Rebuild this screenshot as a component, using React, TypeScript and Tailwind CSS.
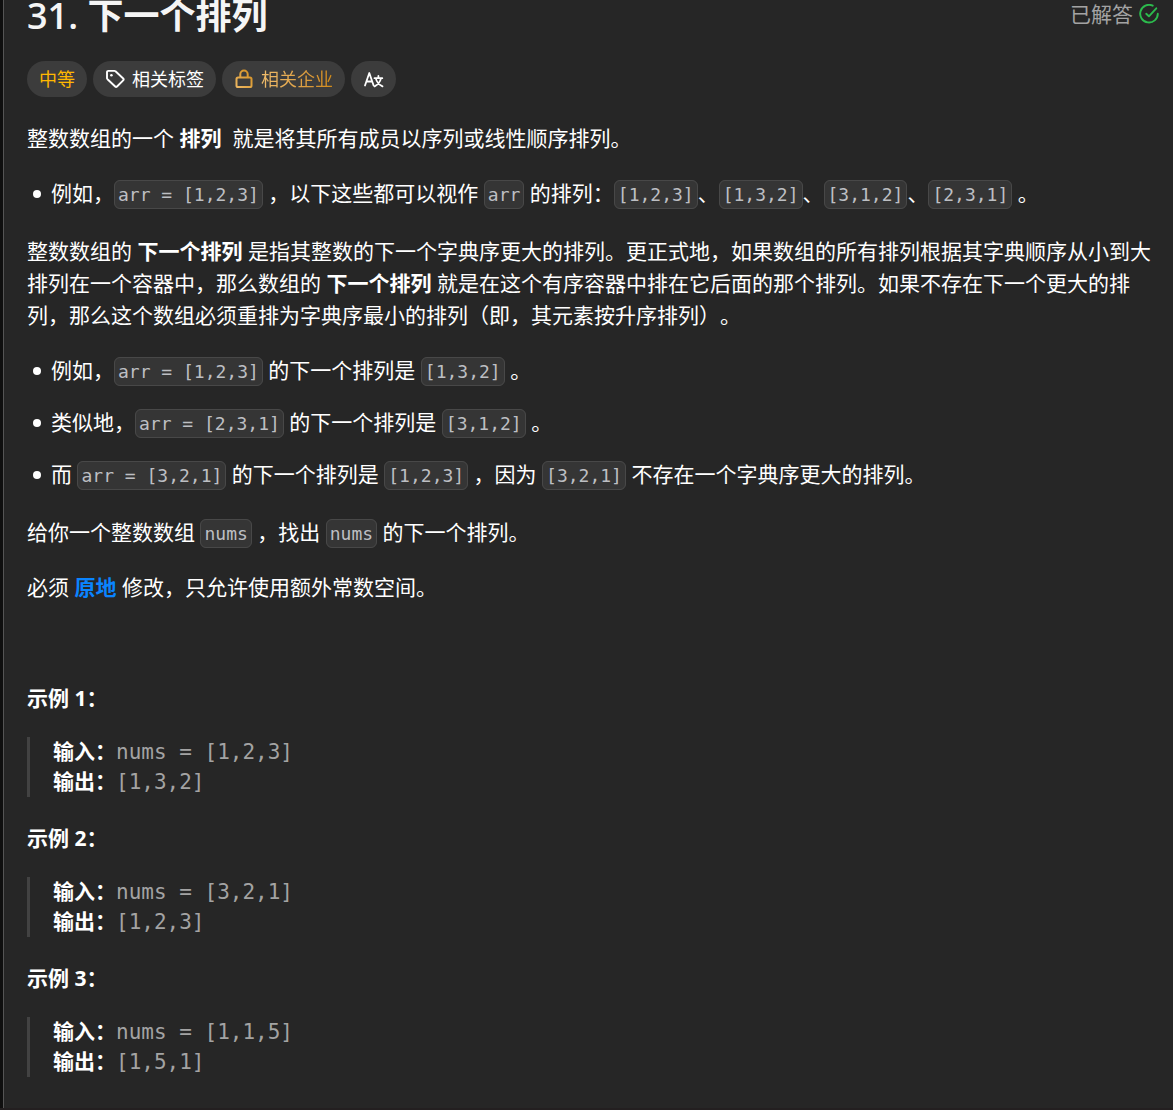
import React from 'react';

const Code = ({ children }: { children: React.ReactNode }) => (
  <code className="rounded-md border border-[#484848] bg-[#353535] p-[3px] font-['DejaVu_Sans_Mono',monospace] text-lg leading-none text-[#bdbfc3]">
    {children}
  </code>
);

const Item = ({ children }: { children: React.ReactNode }) => (
  <li className="before:mr-2.5 before:inline-block before:h-2 before:w-2 before:rounded-full before:bg-white before:align-[3px]">
    {children}
  </li>
);

const examples = [
  { id: 1, input: 'nums = [1,2,3]', output: '[1,3,2]' },
  { id: 2, input: 'nums = [3,2,1]', output: '[1,2,3]' },
  { id: 3, input: 'nums = [1,1,5]', output: '[1,5,1]' },
];

const TagIcon = () => (
  <svg viewBox="0 0 20 20" className="h-5 w-5" fill="none" stroke="currentColor" strokeWidth="1.9" strokeLinejoin="round">
    <path d="M2 3.200A1.300 1.300 0 0 1 3.300 1.900h6.200c.4 0 .8.2 1 .4l7.700 7.200c.5.5.5 1.300 0 1.800l-6.200 6.200c-.5.5-1.300.5-1.800 0L2.500 10.200c-.3-.3-.5-.7-.5-1z" />
    <circle cx="6.400" cy="6.300" r="1.300" fill="currentColor" stroke="none" />
  </svg>
);

const LockIcon = () => (
  <svg viewBox="0 0 20 20" className="h-5 w-5" fill="none" stroke="url(#gold)" strokeWidth="2">
    <defs>
      <linearGradient id="gold" x1="0" y1="20" x2="20" y2="0" gradientUnits="userSpaceOnUse">
        <stop stopColor="#f0bd6c" />
        <stop offset="1" stopColor="#d18a16" />
      </linearGradient>
    </defs>
    <rect x="2.500" y="8.500" width="15" height="9.500" rx="1.600" />
    <path d="M6.300 8.500V5.300a3.700 3.700 0 0 1 7.400 0v3.200" />
  </svg>
);

const TranslateIcon = () => (
  <svg viewBox="0 0 21 21" className="h-[21px] w-[21px]" fill="none" stroke="currentColor" strokeWidth="1.8" strokeLinecap="round" strokeLinejoin="round">
    <path d="M2 16.500 6.300 4l4.300 12.500M3.500 12.500h5.600" />
    <path d="M11.500 9.200h7.800M15.400 7v2.200M18 9.400c-.9 3.500-3.100 6.300-6.400 8M12.800 9.400c.9 3.500 3.200 6.300 6.700 8" />
  </svg>
);

const SolvedIcon = () => (
  <svg viewBox="0 0 20 20" className="h-5 w-5" fill="none" stroke="#2cbb4d" strokeWidth="1.9" strokeLinecap="round" strokeLinejoin="round">
    <path d="M13.700 1.700A8.800 8.800 0 1 0 18.800 9.700" />
    <path d="m7.200 9.800 2.700 2.500 7.400-8" />
  </svg>
);

export default function App() {
  return (
    <div lang="zh-CN" className="min-h-screen border-b-2 border-[#231f20] bg-[#0f0f0f] pl-[3px] font-['Open_Sans','Noto_Sans_CJK_SC',sans-serif] [text-spacing-trim:space-all]">
      <main className="min-h-[calc(100vh-2px)] border-l border-[#555] bg-[#262626] pr-3.5 pl-[23px] text-[21px] leading-8 text-white">
        <header className="flex items-start justify-between">
          <h1 className="text-4xl leading-8 font-bold text-[#f5f5f5]">
            <span className="font-semibold">31.</span>
            <span className="font-normal"> </span>下一个排列
          </h1>
          <div className="flex items-center gap-1.5 leading-7 text-[#a3a3a3]">
            已解答
            <SolvedIcon />
          </div>
        </header>

        <div className="mt-[29px] mb-[25px] flex gap-1.5 text-lg leading-9">
          <span className="rounded-full bg-[#3c3c3c] px-3 text-[#ffb800]">中等</span>
          <button className="flex items-center gap-[7px] rounded-full bg-[#3c3c3c] px-3">
            <TagIcon />
            相关标签
          </button>
          <button className="flex items-center gap-[7px] rounded-full bg-[#3c3c3c] px-3">
            <LockIcon />
            <span className="bg-linear-to-r from-[#f0bd6c] to-[#d18a16] bg-clip-text text-transparent">相关企业</span>
          </button>
          <button aria-label="翻译" className="flex items-center rounded-full bg-[#3c3c3c] px-3">
            <TranslateIcon />
          </button>
        </div>

        <p className="mb-[23px]">
          整数数组的一个 <strong>排列</strong>&nbsp; 就是将其所有成员以序列或线性顺序排列。
        </p>
        <ul className="mb-[26px] pl-1.5">
          <Item>
            例如，<Code>arr = [1,2,3]</Code> ，以下这些都可以视作 <Code>arr</Code> 的排列：<Code>[1,2,3]</Code>、<Code>[1,3,2]</Code>、<Code>[3,1,2]</Code>、<Code>[2,3,1]</Code> 。
          </Item>
        </ul>
        <p className="mb-[23px]">
          整数数组的 <strong>下一个排列</strong> 是指其整数的下一个字典序更大的排列。更正式地，如果数组的所有排列根据其字典顺序从小到大排列在一个容器中，那么数组的 <strong>下一个排列</strong> 就是在这个有序容器中排在它后面的那个排列。如果不存在下一个更大的排列，那么这个数组必须重排为字典序最小的排列（即，其元素按升序排列）。
        </p>
        <ul className="mb-[26px] space-y-5 pl-1.5">
          <Item>
            例如，<Code>arr = [1,2,3]</Code> 的下一个排列是 <Code>[1,3,2]</Code> 。
          </Item>
          <Item>
            类似地，<Code>arr = [2,3,1]</Code> 的下一个排列是 <Code>[3,1,2]</Code> 。
          </Item>
          <Item>
            而 <Code>arr = [3,2,1]</Code> 的下一个排列是 <Code>[1,2,3]</Code> ，因为 <Code>[3,2,1]</Code> 不存在一个字典序更大的排列。
          </Item>
        </ul>
        <p className="mb-[23px]">
          给你一个整数数组 <Code>nums</Code> ，找出 <Code>nums</Code> 的下一个排列。
        </p>
        <p className="mb-[23px]">
          必须 <a href="#in-place" className="font-bold text-[#0a84ff]">原地</a> 修改，只允许使用额外常数空间。
        </p>
        <p className="mb-6">&nbsp;</p>

        {examples.map((ex) => (
          <section key={ex.id}>
            <p className="mb-[23px] font-bold">示例 {ex.id}：</p>
            <pre className="mb-[25px] border-l-3 border-[#424242] pl-[23px] font-['DejaVu_Sans_Mono','Noto_Sans_CJK_SC',monospace] leading-[30px] text-[#a3a3a3]">
              <strong className="text-white">输入：</strong>{ex.input}{'\n'}
              <strong className="text-white">输出：</strong>{ex.output}
            </pre>
          </section>
        ))}
      </main>
    </div>
  );
}
